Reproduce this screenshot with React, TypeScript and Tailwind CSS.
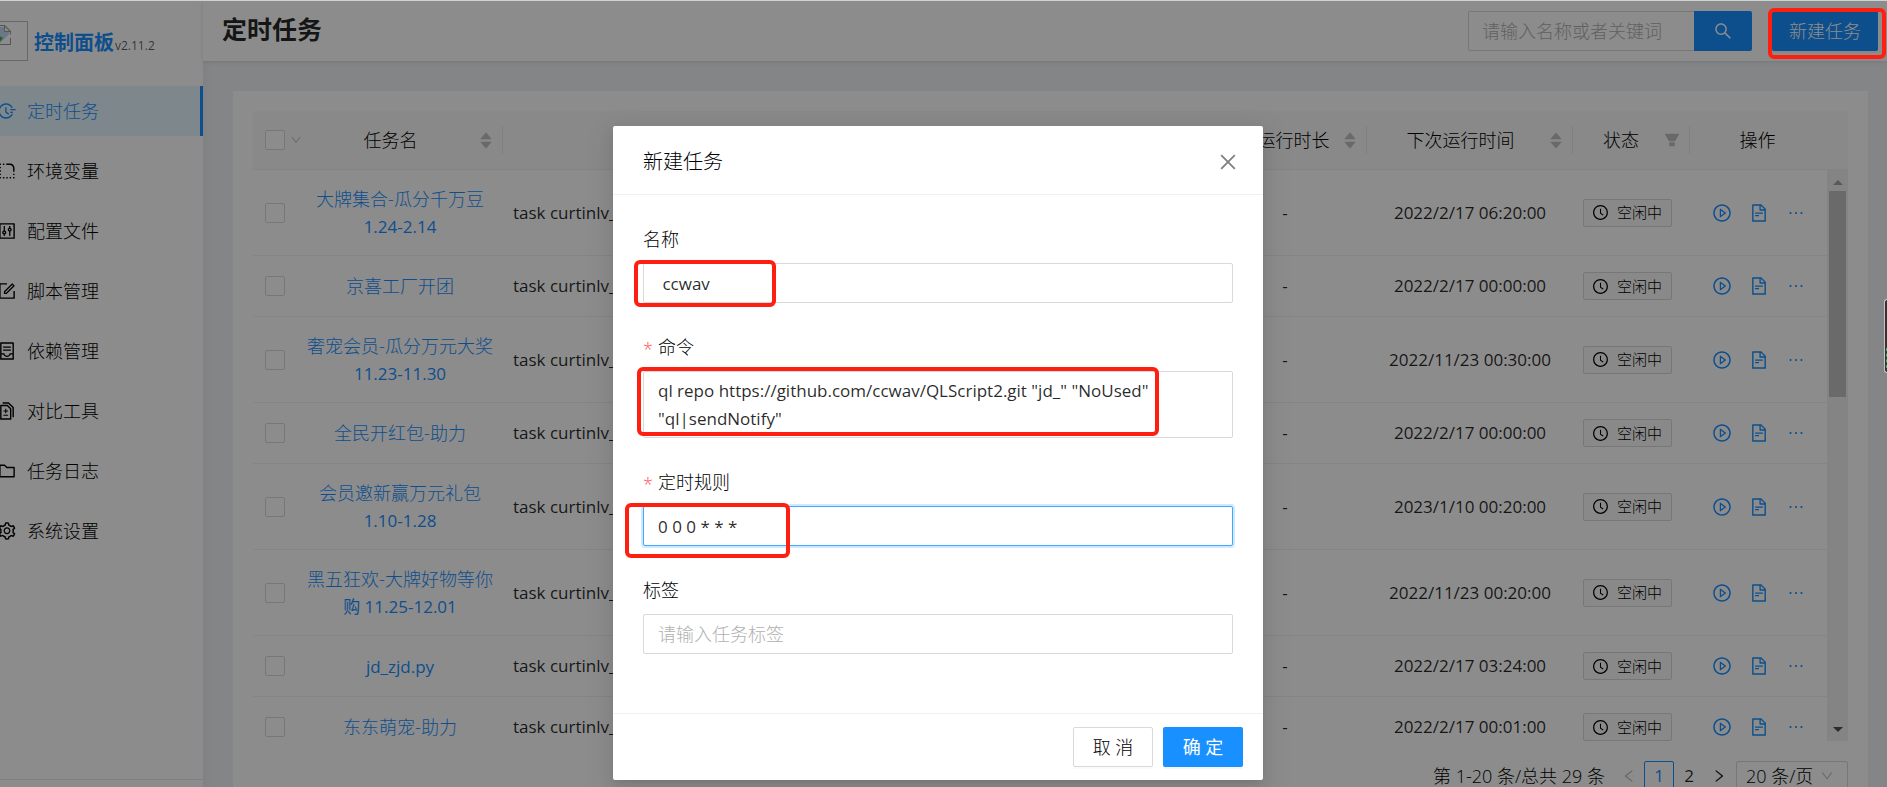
import { useState } from 'react';
import type { ReactNode } from 'react';
import clsx from 'clsx';
import type { IconType } from 'react-icons';
import {
  AiFillCaretDown,
  AiFillCaretUp,
  AiFillFilter,
  AiOutlineClockCircle,
  AiOutlineClose,
  AiOutlineContainer,
  AiOutlineControl,
  AiOutlineDiff,
  AiOutlineDown,
  AiOutlineEllipsis,
  AiOutlineFieldTime,
  AiOutlineFileText,
  AiOutlineFolder,
  AiOutlineForm,
  AiOutlineLeft,
  AiOutlinePlayCircle,
  AiOutlineRadiusUpright,
  AiOutlineRight,
  AiOutlineSearch,
  AiOutlineSetting,
} from 'react-icons/ai';

const MENU: { label: string; icon: IconType }[] = [
  { label: '定时任务', icon: AiOutlineFieldTime },
  { label: '环境变量', icon: AiOutlineRadiusUpright },
  { label: '配置文件', icon: AiOutlineControl },
  { label: '脚本管理', icon: AiOutlineForm },
  { label: '依赖管理', icon: AiOutlineContainer },
  { label: '对比工具', icon: AiOutlineDiff },
  { label: '任务日志', icon: AiOutlineFolder },
  { label: '系统设置', icon: AiOutlineSetting },
];

interface Task {
  name: string[];
  next: string;
}

const TASKS: Task[] = [
  { name: ['大牌集合-瓜分千万豆', '1.24-2.14'], next: '2022/2/17 06:20:00' },
  { name: ['京喜工厂开团'], next: '2022/2/17 00:00:00' },
  { name: ['奢宠会员-瓜分万元大奖', '11.23-11.30'], next: '2022/11/23 00:30:00' },
  { name: ['全民开红包-助力'], next: '2022/2/17 00:00:00' },
  { name: ['会员邀新赢万元礼包', '1.10-1.28'], next: '2023/1/10 00:20:00' },
  { name: ['黑五狂欢-大牌好物等你', '购 11.25-12.01'], next: '2022/11/23 00:20:00' },
  { name: ['jd_zjd.py'], next: '2022/2/17 03:24:00' },
  { name: ['东东萌宠-助力'], next: '2022/2/17 00:01:00' },
];

function Cols({ gutter = false }: { gutter?: boolean }) {
  return (
    <colgroup>
      <col className="w-[44px]" />
      <col className="w-[206px]" />
      <col />
      <col className="w-[164px]" />
      <col className="w-[206px]" />
      <col className="w-[117px]" />
      <col className="w-[137px]" />
      {gutter && <col className="w-[21px]" />}
    </colgroup>
  );
}

function BrokenImage() {
  return (
    <div className="h-10 w-7 shrink-0 border border-l-0 border-[#bdbdbd] pt-[3px]">
      <svg width="11" height="20" viewBox="9 0 11 20">
        <path d="M0 0.5h14l5.5 5.5v13.5H0z" fill="#fff" stroke="#9a9a9a" />
        <path d="M0 2h13v5h5v2l-9 9H0z" fill="#c3d7f7" />
        <path d="M0 14c4-4 9-3 12-1l-5 6H0z" fill="#4caf3a" />
        <path d="M13.5 1v5.5H19z" fill="#fff" stroke="#9a9a9a" />
        <path d="M20 9v4l-6 6h-4z" fill="#fff" />
        <path d="M19.5 13v6.5H13" fill="none" stroke="#9a9a9a" />
      </svg>
    </div>
  );
}

function Sidebar() {
  return (
    <aside className="flex w-[203px] shrink-0 flex-col bg-white shadow-[2px_0_8px_rgba(29,35,41,0.05)]">
      <div className="flex h-[85px] items-start pt-5">
        <BrokenImage />
        <h1 className="flex items-baseline pt-2 pl-1.5 leading-7">
          <a href="#home" className="text-xl leading-7 font-bold text-[#1890ff]">控制面板</a>
          <span className="pl-px text-xs text-black/65">v2.11.2</span>
        </h1>
      </div>
      <nav className="flex flex-1 flex-col gap-[10px]">
        {MENU.map(({ label, icon: Icon }, i) => (
          <a
            key={label}
            href={`#menu-${i}`}
            className={clsx(
              'flex h-[50px] items-center gap-[10px] text-lg font-light',
              i === 0 ? 'border-r-3 border-[#1890ff] bg-[#e6f7ff] text-[#1890ff]' : 'text-black',
            )}
          >
            <Icon className="-ml-[3px] size-5 shrink-0" />
            {label}
          </a>
        ))}
      </nav>
      <div className="h-2 border-t border-[#e8e8e8]" />
    </aside>
  );
}

// Red frame laid over the thing it points out
function Mark({ className }: { className: string }) {
  return <span className={clsx('pointer-events-none absolute z-50 rounded-md border-4 border-[#ff1f10]', className)} />;
}

function Header() {
  return (
    <header className="flex h-[60px] shrink-0 items-center bg-white pr-[9px] pl-[19px] shadow-[0_1px_4px_rgba(0,21,41,0.12)]">
      <h2 className="flex-1 pb-1 text-[25px] leading-8 font-bold text-black/85">定时任务</h2>
      <form className="flex" onSubmit={(e) => e.preventDefault()}>
        <input
          type="text"
          aria-label="搜索任务"
          placeholder="请输入名称或者关键词"
          className="h-10 w-[226px] rounded-l-xs border border-r-0 border-[#d9d9d9] px-[13px] text-lg font-light text-black/85 placeholder:text-[#b0b0b0]"
        />
        <button type="submit" aria-label="搜索" className="flex h-10 w-[58px] items-center justify-center rounded-r-xs bg-[#1890ff] text-white">
          <AiOutlineSearch className="size-5" />
        </button>
      </form>
      <div className="relative ml-5">
        <button type="button" className="h-10 w-[106px] rounded-xs bg-[#1890ff] text-lg font-light text-white shadow-[0_2px_0_rgba(0,0,0,0.04)]">
          新建任务
        </button>
        <Mark className="-top-[3px] -right-2 -bottom-2 -left-1" />
      </div>
    </header>
  );
}

function Sorter() {
  return (
    <button type="button" aria-label="排序" className="flex flex-col items-center text-[#bfbfbf]">
      <AiFillCaretUp className="size-4" />
      <AiFillCaretDown className="-mt-[7px] size-4" />
    </button>
  );
}

function HeadCell({ title, extra, line = true }: { title: string; extra?: ReactNode; line?: boolean }) {
  return (
    <th scope="col" className="h-[59px] border-b border-[#f0f0f0] p-0 text-lg font-light text-black">
      <div className={clsx('flex h-7 items-center pr-2 pl-1.5', line && 'border-r border-[#e8e8e8]')}>
        <span className="flex-1 text-center whitespace-nowrap">{title}</span>
        {extra}
      </div>
    </th>
  );
}

function TableHead() {
  return (
    <table className="w-full table-fixed border-separate border-spacing-0 bg-[#fafafa]">
      <Cols gutter />
      <thead>
        <tr>
          <th className="border-b border-[#f0f0f0] p-0">
            <div className="flex items-center gap-[5px] pl-3">
              <input type="checkbox" aria-label="全选" className="size-5 shrink-0 appearance-none rounded-xs border border-[#d9d9d9] bg-white" />
              <AiOutlineDown className="size-3 shrink-0 text-[#bfbfbf]" />
            </div>
          </th>
          <HeadCell title="任务名" extra={<Sorter />} />
          <HeadCell title="命令" />
          <HeadCell title="最后运行时长" extra={<Sorter />} />
          <HeadCell title="下次运行时间" extra={<Sorter />} />
          <HeadCell
            title="状态"
            extra={
              <button type="button" aria-label="筛选" className="text-[#bfbfbf]">
                <AiFillFilter className="size-[18px]" />
              </button>
            }
          />
          <HeadCell title="操作" line={false} />
          <th className="border-b border-[#f0f0f0] p-0" />
        </tr>
      </thead>
    </table>
  );
}

function TaskRow({ task }: { task: Task }) {
  const cell = 'border-b border-[#f0f0f0] px-[10px] py-0';
  return (
    <tr className={task.name.length > 1 ? 'h-[86px]' : 'h-[61px]'}>
      <td className="border-b border-[#f0f0f0] py-0 pr-0 pl-3">
        <input
          type="checkbox"
          aria-label={task.name.join(' ')}
          className="block size-5 appearance-none rounded-xs border border-[#d9d9d9] bg-white"
        />
      </td>
      <td className="border-b border-[#f0f0f0] p-0 text-center leading-[27px]">
        <a href="#task" className="text-[#1890ff]">
          {task.name.map((l) => (
            <span
              key={l}
              className={clsx('block whitespace-nowrap', /^[\x20-\x7e购]+$/.test(l) ? 'text-[17px]' : 'text-lg leading-[27px] font-light')}
            >
              {l}
            </span>
          ))}
        </a>
      </td>
      <td className={cell}>task curtinlv_</td>
      <td className={clsx(cell, 'text-center')}>-</td>
      <td className={clsx(cell, 'text-center whitespace-nowrap')}>{task.next}</td>
      <td className={cell}>
        <span className="flex h-7 w-[89px] items-center gap-2 rounded-xs border border-[#d9d9d9] bg-[#fafafa] pl-2 text-[15px] font-light text-black">
          <AiOutlineClockCircle className="size-[17px]" />
          空闲中
        </span>
      </td>
      <td className={cell}>
        <div className="flex justify-center gap-[17px] text-[#1890ff]">
          <button type="button" aria-label="运行"><AiOutlinePlayCircle className="size-5" /></button>
          <button type="button" aria-label="日志"><AiOutlineFileText className="size-5" /></button>
          <button type="button" aria-label="更多"><AiOutlineEllipsis className="size-5" /></button>
        </div>
      </td>
    </tr>
  );
}

function ScrollTrack() {
  return (
    <div className="flex w-[21px] shrink-0 flex-col items-center bg-[#f1f1f1]">
      <div className="flex h-[21px] items-center pt-1">
        <svg width="10" height="5" viewBox="0 0 10 5"><path d="M0 5l5-5 5 5z" fill="#a3a3a3" /></svg>
      </div>
      <div className="h-[206px] w-[17px] bg-[#c1c1c1]" />
      <div className="flex-1" />
      <div className="flex h-6 items-center">
        <svg width="10" height="5" viewBox="0 0 10 5"><path d="M0 0l5 5 5-5z" fill="#505050" /></svg>
      </div>
    </div>
  );
}

function Pagination() {
  return (
    <div className="flex items-center justify-end pt-5 text-[17px] text-black/85">
      <span className="text-lg font-light whitespace-nowrap text-black">第 1-20 条/总共 29 条</span>
      <button type="button" aria-label="上一页" className="ml-[9px] flex size-[30px] items-center justify-center text-black/25">
        <AiOutlineLeft className="size-4" />
      </button>
      <button type="button" className="size-[30px] rounded-xs border border-[#1890ff] text-[#1890ff]">1</button>
      <button type="button" className="size-[30px]">2</button>
      <button type="button" aria-label="下一页" className="flex size-[30px] items-center justify-center">
        <AiOutlineRight className="size-4" />
      </button>
      <div className="relative ml-0.5">
        <select aria-label="每页条数" className="h-[30px] w-[112px] appearance-none rounded-xs border border-[#d9d9d9] bg-white pl-[9px] text-lg leading-7 font-light text-black">
          <option>20 条/页</option>
          <option>50 条/页</option>
        </select>
        <AiOutlineDown className="pointer-events-none absolute top-2 right-[14px] size-[14px] text-[#bfbfbf]" />
      </div>
    </div>
  );
}

function Field({ id, label, required, children }: { id: string; label: string; required?: boolean; children: ReactNode }) {
  return (
    <div className="mb-[30px]">
      <label htmlFor={id} className="mb-[10px] flex h-7 items-center gap-[5px] text-lg leading-7 font-light text-black">
        {required && <span className="pt-1 text-[#ff4d4f]">*</span>}
        {label}
      </label>
      <div className="relative">{children}</div>
    </div>
  );
}

const INPUT = 'block w-full rounded-xs border bg-white px-[14px] text-black/85 outline-none';

function TaskModal() {
  const [form, setForm] = useState({
    name: ' ccwav',
    command: 'ql repo https://github.com/ccwav/QLScript2.git "jd_" "NoUsed" "ql|sendNotify"',
    schedule: '0 0 0 * * *',
    labels: '',
  });
  const set = (key: keyof typeof form) => (e: { target: { value: string } }) =>
    setForm({ ...form, [key]: e.target.value });

  return (
    <div
      role="dialog"
      aria-label="新建任务"
      className="w-[650px] rounded-xs bg-white text-black/85 shadow-[0_3px_6px_-4px_rgba(0,0,0,0.12),0_6px_16px_rgba(0,0,0,0.08),0_9px_28px_8px_rgba(0,0,0,0.05)]"
    >
      <div className="flex h-[69px] items-center justify-between border-b border-[#f0f0f0] pt-1 pr-6 pl-[30px]">
        <h3 className="text-xl font-light text-black">新建任务</h3>
        <button type="button" aria-label="关闭" className="text-black/50">
          <AiOutlineClose className="size-[22px]" />
        </button>
      </div>
      <form className="px-[30px] pt-[30px] pb-[29px]" onSubmit={(e) => e.preventDefault()}>
        <Field id="name" label="名称">
          <input id="name" type="text" value={form.name} onChange={set('name')} className={clsx(INPUT, 'h-10 border-[#d9d9d9] text-[17px]')} />
          <Mark className="-top-[3px] -left-[9px] h-[47px] w-[142px]" />
        </Field>
        <Field id="command" label="命令" required>
          <textarea
            id="command"
            rows={2}
            value={form.command}
            onChange={set('command')}
            className={clsx(INPUT, 'h-[67px] resize-none overflow-hidden border-[#d9d9d9] py-[5px] pr-[60px] text-[17px] leading-7')}
          />
          <Mark className="-top-1 -left-[6px] h-[69px] w-[522px]" />
        </Field>
        <Field id="schedule" label="定时规则" required>
          <input
            id="schedule"
            type="text"
            value={form.schedule}
            onChange={set('schedule')}
            className={clsx(INPUT, 'h-10 border-[#40a9ff] shadow-[0_0_0_2px_rgba(24,144,255,0.2)]')}
          />
          <Mark className="-top-[3px] -left-[18px] h-[55px] w-[165px]" />
        </Field>
        <Field id="labels" label="标签">
          <input
            id="labels"
            type="text"
            placeholder="请输入任务标签"
            value={form.labels}
            onChange={set('labels')}
            className={clsx(INPUT, 'h-10 border-[#d9d9d9] text-lg font-light placeholder:text-[#b0b0b0]')}
          />
        </Field>
      </form>
      <div className="flex justify-end gap-[10px] border-t border-[#f0f0f0] px-5 py-[13px] text-lg font-light text-black">
        <button type="button" className="h-10 w-20 rounded-xs border border-[#d9d9d9] shadow-[0_2px_0_rgba(0,0,0,0.02)]">取 消</button>
        <button type="button" className="h-10 w-20 rounded-xs bg-[#1890ff] font-normal text-white shadow-[0_2px_0_rgba(0,0,0,0.04)]">确 定</button>
      </div>
    </div>
  );
}

export default function App() {
  return (
    <div className="relative flex h-screen overflow-hidden border-t border-[#cdd2d2] bg-[#f0f2f5] font-['Open_Sans','Noto_Sans_CJK_SC',sans-serif] text-[17px] text-black/85">
      <Sidebar />
      <div className="flex min-w-0 flex-1 flex-col">
        <Header />
        <main className="mt-[30px] mr-[19px] ml-[30px] flex-1 bg-white p-5">
          <TableHead />
          <div className="flex h-[571px] overflow-hidden">
            <div className="min-w-0 flex-1">
              <table className="w-full table-fixed border-separate border-spacing-0">
                <Cols />
                <tbody>
                  {TASKS.map((t) => <TaskRow key={t.name[0]} task={t} />)}
                </tbody>
              </table>
            </div>
            <ScrollTrack />
          </div>
          <Pagination />
        </main>
      </div>

      <div className="absolute inset-0 z-40 flex items-start justify-center bg-black/45 pt-[125px] pr-[11px]">
        <TaskModal />
      </div>

      {/* floating desktop meter peeking in from the edge */}
      <div className="absolute top-[298px] right-0 z-50 flex h-[74px] w-[3px] flex-col justify-end rounded-l-sm border border-r-0 border-[#c4c4c4] bg-[#333]">
        <div className="mb-1 h-5 border-r border-dashed border-[#22c55e]" />
      </div>
    </div>
  );
}
